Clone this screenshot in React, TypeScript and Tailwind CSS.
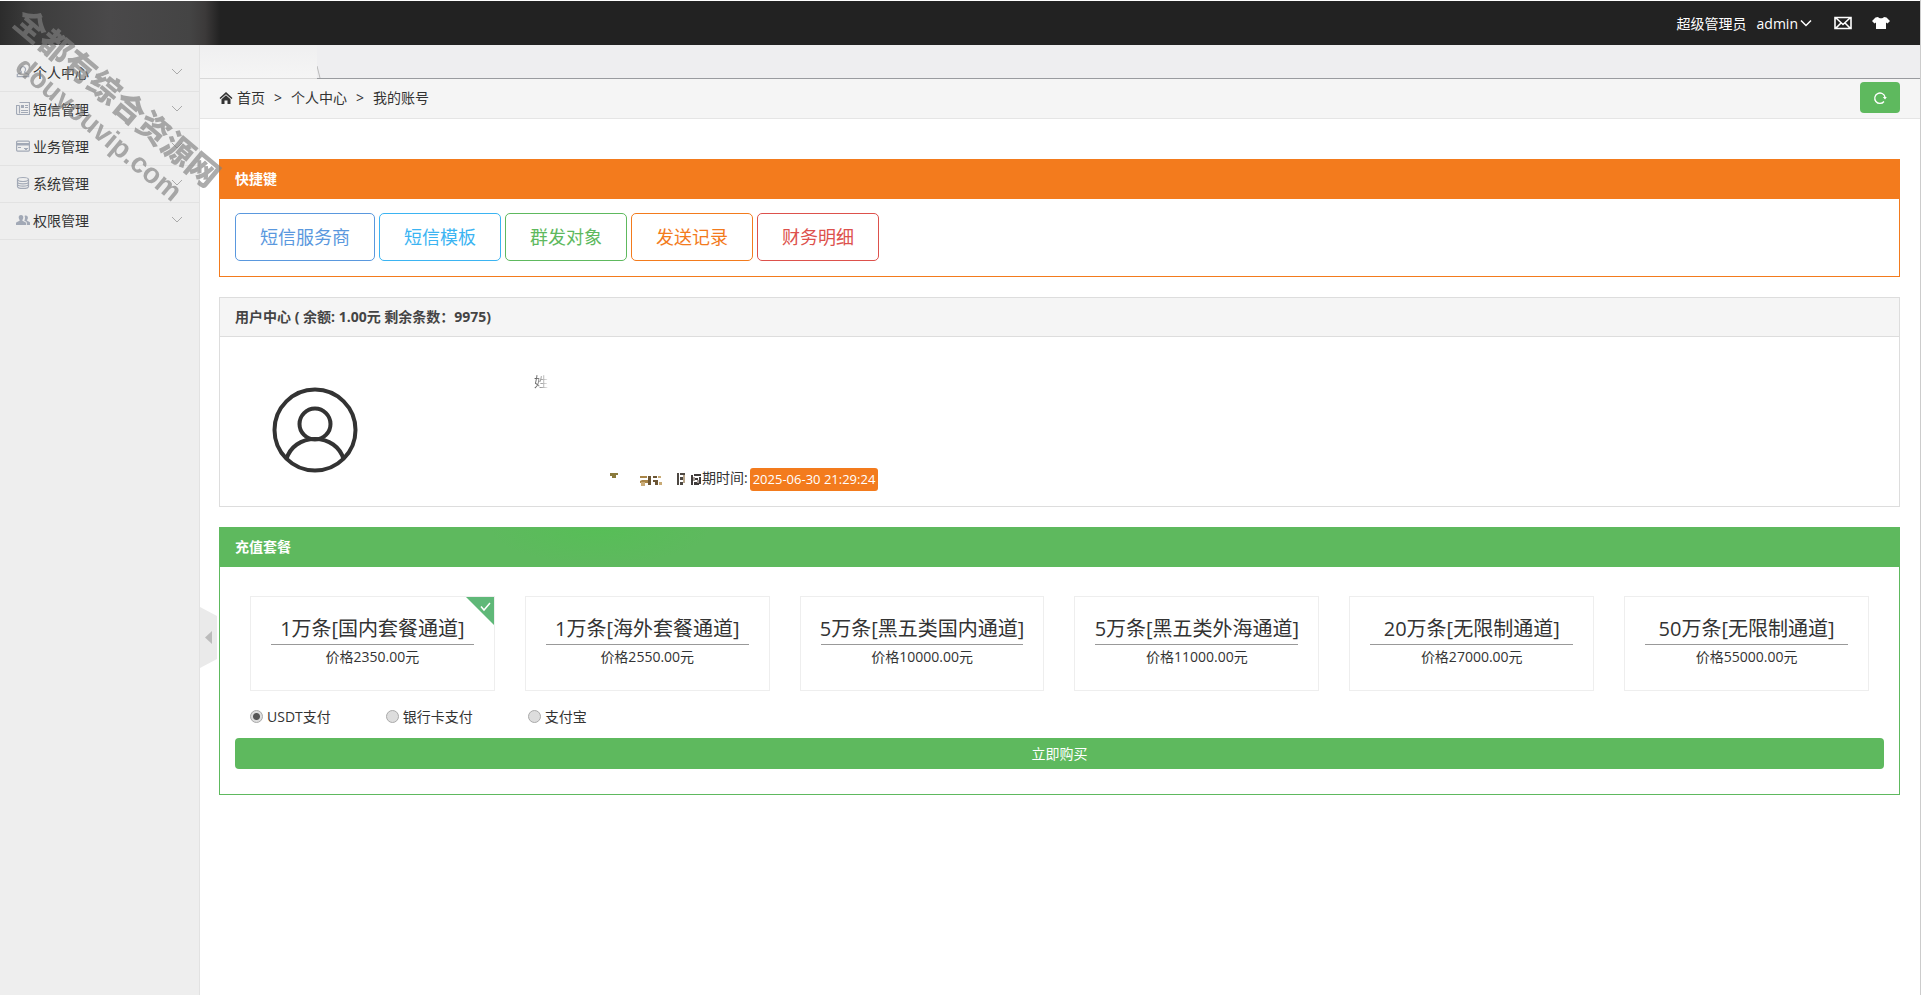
import { useState } from 'react';

const menu = [
  { label: '个人中心', icon: 'user' },
  { label: '短信管理', icon: 'news' },
  { label: '业务管理', icon: 'card' },
  { label: '系统管理', icon: 'database' },
  { label: '权限管理', icon: 'users' },
];

const plans = [
  { title: '1万条[国内套餐通道]', price: '价格2350.00元' },
  { title: '1万条[海外套餐通道]', price: '价格2550.00元' },
  { title: '5万条[黑五类国内通道]', price: '价格10000.00元' },
  { title: '5万条[黑五类外海通道]', price: '价格11000.00元' },
  { title: '20万条[无限制通道]', price: '价格27000.00元' },
  { title: '50万条[无限制通道]', price: '价格55000.00元' },
];

const shortcuts = [
  { label: '短信服务商', className: 'border-[#5a98de] text-[#5a98de]' },
  { label: '短信模板', className: 'border-[#3bb4f2] text-[#3bb4f2]' },
  { label: '群发对象', className: 'border-[#5eb95e] text-[#5eb95e]' },
  { label: '发送记录', className: 'border-[#f37b1d] text-[#f37b1d]' },
  { label: '财务明细', className: 'border-[#dd514c] text-[#dd514c]' },
];

const payments = ['USDT支付', '银行卡支付', '支付宝'];

const MenuIcon = ({ name }: { name: string }) => (
  <svg viewBox="0 0 14 14" className="w-3.5 h-3.5 shrink-0 text-[#a2a9b6]" fill="none" stroke="currentColor">
    {name === 'user' && (
      <path d="M7 1.500a2.800 3 0 0 1 1.700 5.200v1l4 1.600v2.400H1.300V9.300l4-1.600v-1A2.800 3 0 0 1 7 1.500z" strokeWidth="1.200" />
    )}
    {name === 'news' && (
      <g>
        <path d="M3.500.500h10v12H2a1.500 1.500 0 0 1-1.500-1.500V3.500h3M3.500 3.500v8" strokeWidth="1.200" />
        <path d="M9 3.500h3M9 5.500h3M5 8.500h7M5 10.500h7" />
        <path d="M5 3h3v3H5z" fill="currentColor" stroke="none" />
      </g>
    )}
    {name === 'card' && (
      <g>
        <rect x=".6" y="2.100" width="12.800" height="10" rx="1" strokeWidth="1.200" />
        <path d="M1 4h12v2.500H1z" fill="currentColor" stroke="none" />
        <path d="M8 9.500h4M9 10.500h2M2 8.500h3" />
      </g>
    )}
    {name === 'database' && (
      <g strokeWidth="1.200">
        <ellipse cx="7" cy="3.500" rx="5.500" ry="2" />
        <path d="M1.500 3.500v7c0 2.600 11 2.600 11 0v-7M1.500 6c0 2.400 11 2.400 11 0M1.500 8.300c0 2.400 11 2.400 11 0" />
      </g>
    )}
    {name === 'users' && (
      <g fill="currentColor" stroke="none">
        <path d="M5 2c1.600 0 2.400 1.100 2.300 2.600 0 1-.4 1.800-.9 2.300v.9l3.100 1.400c.3.200.5.500.5 1V12H0v-1.800c0-.5.200-.8.500-1l3.100-1.400v-.9c-.5-.5-.9-1.300-.9-2.300C2.600 3.100 3.400 2 5 2z" />
        <path d="M9.800 2.500c1.400 0 2.200 1 2.100 2.300 0 .9-.3 1.600-.8 2v.9l2.500 1.200c.3.100.4.400.4.800V12h-3.200v-2c0-.7-.3-1.100-.8-1.400L8.300 7.700c.5-.8.800-1.900.7-3.200 0-.6-.2-1.200-.5-1.600.4-.3.800-.4 1.300-.4z" />
      </g>
    )}
  </svg>
);

const Header = () => (
  <header className="h-[45px] pt-px bg-white">
    <div className="h-full flex items-center justify-end bg-[linear-gradient(90deg,#2c2c2c_0,#3c3c3c_30px,#4a494a_110px,#444_190px,#3c3a3a_205px,#222_220px)] text-white text-[14px] pr-[30px]">
      <span>超级管理员</span>
      <button className="flex items-center gap-0.5 ml-2.5">
        admin
        <svg viewBox="0 0 12 12" className="w-3 h-3" fill="none" stroke="currentColor" strokeWidth="1.500">
          <path d="M1 3.500l5 5 5-5" />
        </svg>
      </button>
      <button aria-label="消息" className="ml-[22px]">
        <svg viewBox="0 0 18 14" className="w-[18px] h-3.5" fill="none" stroke="currentColor" strokeWidth="1.600">
          <path d="M1 1.500h16v11H1zM2 2l7 6.500L16 2M2 12l5-5M16 12l-5-5" />
        </svg>
      </button>
      <button aria-label="换肤" className="ml-5">
        <svg viewBox="0 0 18 14" className="w-[18px] h-3.5" fill="currentColor">
          <path d="M6 1c1 1.700 5 1.700 6 0l2.500.500L18 5l-2.500 2.500L14 6.500V13H4V6.500L2.500 7.500 0 5l3.500-3.500z" />
        </svg>
      </button>
    </div>
  </header>
);

const Sidebar = () => (
  <aside className="w-[200px] shrink-0 bg-[#eee] border-r border-[#e2e2e2] pt-[10px]">
    <nav>
      {menu.map((item) => (
        <a
          key={item.label}
          href="#"
          className="flex items-center h-[37px] px-4 pb-0.5 border-b border-[#e2e2e2] text-[14px] text-[#333]"
        >
          <MenuIcon name={item.icon} />
          <span className="ml-[3px] flex-1">{item.label}</span>
          <svg viewBox="0 0 12 8" className="w-3 h-2" fill="none" stroke="#aaa">
            <path d="M1 1l5 5 5-5" />
          </svg>
        </a>
      ))}
    </nav>
  </aside>
);

const Watermark = () => (
  <div className="absolute left-8 top-0 origin-top-left rotate-[40deg] text-center text-[#808080] opacity-65 whitespace-nowrap pointer-events-none">
    <p className="text-[32px] leading-10 font-black">全都有综合资源网</p>
    <p className="text-[28px] leading-8 pl-3 font-bold font-['Liberation_Sans',sans-serif]">douyouvip.com</p>
  </div>
);

// leftovers of the masked account details
const MaskedDetails = () => (
  <svg viewBox="0 0 92 14" className="w-[92px] h-3.5" aria-hidden="true">
    <path d="M0 1h8v2H6v3H2V4H0z" fill="#8a7a3c" />
    <path d="M30 4h7v2h-7zM32 8h6v3h-8v-2z" fill="#a98547" />
    <path d="M38 4h3v9h-3zM43 4h4v2h-4zM43 8h5v2h-5zM45 10h3v3h-3z" fill="#6b5534" />
    <path d="M31 10h4v4h-4zM48 4h3v2h-3zM49 10h3v3h-3z" fill="#c9ab77" />
    <path d="M67 1h2v12h-2zM70 1h5v2h-5zM70 5h3v3h-3zM70 10h3v3h-3z" fill="#4d4842" />
    <path d="M73 3h2v8h-2z" fill="#b8a68c" />
    <path d="M81 3h2v10h-2zM84 2h7v2h-7zM85 6h3v2h-3zM84 10h5v3h-5zM89 5h2v7h-2z" fill="#3f3b3a" />
    <path d="M83 5h2v4h-2zM87 8h2v3h-2z" fill="#a69d98" />
  </svg>
);

export default function App() {
  const [plan, setPlan] = useState(0);
  const [payment, setPayment] = useState(0);

  return (
    <div className="relative min-h-screen flex flex-col overflow-hidden bg-white border-r border-[#ccc] text-[#333] text-[14px] font-['Open_Sans','Noto_Sans_CJK_SC',sans-serif]">
      <Header />

      <div className="flex flex-1">
        <Sidebar />

        <div className="relative flex-1 min-w-0">
          {/* Tab strip */}
          <div className="h-[34px] flex bg-[#eeeef0] border-b border-[#999b9f]">
            <div className="w-[117px] h-[34px] bg-gradient-to-b from-[#efeff0] to-[#f5f5f5] border-b border-[#d8d8d8]" />
            <svg viewBox="0 0 6 12" className="w-1.5 h-3 self-end" fill="none" stroke="#bbb">
              <path d="M0 0l3 12" />
            </svg>
          </div>

          {/* Breadcrumb */}
          <div className="h-10 flex items-center justify-between bg-[#f5f5f5] border-b border-[#e5e5e5] pl-[19px] pr-5 pb-0.5">
            <nav className="flex items-center">
              <svg viewBox="0 0 14 14" className="w-3.5 h-3.5 mr-1" fill="#333">
                <path d="M7 1l6.500 6-1 1L7 3.200 1.500 8l-1-1zM7 4.300l4.500 4V13H8.500V9.500h-3V13h-3V8.300z" />
              </svg>
              <a href="#">首页</a>
              <span className="mx-[9px]">&gt;</span>
              <span>个人中心</span>
              <span className="mx-[9px]">&gt;</span>
              <span>我的账号</span>
            </nav>
            <button aria-label="刷新" className="w-10 h-[31px] rounded bg-[#5eb95e] flex items-center justify-center">
              <svg viewBox="0 0 14 14" className="w-3.5 h-3.5" fill="none" stroke="white" strokeWidth="1.300">
                <path d="M11 10.500A5.200 5.200 0 1 1 12 6" />
                <path d="M9.800 6h4L12 8.500z" fill="white" stroke="none" />
              </svg>
            </button>
          </div>

          <button
            aria-label="收起菜单"
            className="absolute left-0 top-[562px] w-[17px] h-[61px]"
          >
            <svg viewBox="0 0 17 61" className="w-full h-full">
              <path d="M0 0l17 9v43L0 61z" fill="#eaeaea" />
              <path d="M12 24v13l-7-6.500z" fill="#bbb" />
            </svg>
          </button>

          <main className="pl-[19px] pr-5 pt-10 pb-10 flex flex-col gap-5">
            <section className="border border-[#f37b1d]">
              <h2 className="h-[39px] flex items-center px-[15px] pb-0.5 bg-[#f37b1d] text-white font-bold">快捷键</h2>
              <div className="flex flex-wrap gap-1 px-[15px] pt-3.5 pb-[15px]">
                {shortcuts.map((item) => (
                  <button
                    key={item.label}
                    className={`h-12 px-6 rounded-[5px] border text-[18px] ${item.className}`}
                  >
                    {item.label}
                  </button>
                ))}
              </div>
            </section>

            <section className="border border-[#ddd]">
              <h2 className="h-[39px] flex items-center px-[15px] pb-0.5 bg-[#f5f5f5] border-b border-[#ddd] text-[#444] font-bold">
                用户中心 ( 余额: 1.00元 剩余条数：9975)
              </h2>
              <div className="h-[169px] flex pl-[52px] pt-[34px]">
                <svg viewBox="0 0 86 86" className="mt-4 w-[86px] h-[86px]" fill="none" stroke="#333" strokeWidth="4">
                  <circle cx="43" cy="43" r="40.500" />
                  <circle cx="43" cy="37" r="15.500" />
                  <path d="M14.500 72C18 60 29 52 43 52s25 8 28.500 20" />
                </svg>
                <div className="ml-[176px] flex flex-col justify-between pb-[15px]">
                  <span className="self-start bg-gradient-to-r from-[#555] to-[#eee] bg-clip-text text-transparent">姓</span>
                  <div className="flex items-start pl-[76px]">
                    <span className="pt-1">
                      <MaskedDetails />
                    </span>
                    <span className="mr-0.5 leading-5">期时间:</span>
                    <span className="h-[23px] px-[3px] flex items-center rounded-[3px] bg-[#f37b1d] text-white text-[13px]">
                      2025-06-30 21:29:24
                    </span>
                  </div>
                </div>
              </div>
            </section>

            <section className="border border-[#5eb95e]">
              <h2 className="h-[39px] flex items-center px-[15px] pb-0.5 bg-[#5eb95e] bg-[radial-gradient(110px_36px_at_380px_0px,#57be57,#5eb95e)] text-white font-bold">
                充值套餐
              </h2>
              <div className="px-[15px] pt-[29px] pb-[25px]">
                <div className="grid grid-cols-6 gap-[30px] px-[15px]">
                  {plans.map((item, index) => (
                    <button
                      key={item.title}
                      onClick={() => setPlan(index)}
                      className="relative h-[95px] px-5 pt-[18px] border border-[#eee] flex flex-col text-center"
                    >
                      <span className="w-full h-[30px] flex justify-center border-b border-[#999] text-[20px] leading-7 whitespace-nowrap">
                        {item.title}
                      </span>
                      <span className="w-full leading-6">{item.price}</span>
                      {plan === index && (
                        <svg viewBox="0 0 28 28" className="absolute top-0 right-0 w-7 h-7">
                          <path d="M0 0h28v28z" fill="#5fb878" />
                          <path d="M15 9.500l3 3.500 6-7" fill="none" stroke="white" strokeWidth="1.500" />
                        </svg>
                      )}
                    </button>
                  ))}
                </div>
                <div className="flex px-[15px] pt-[15px] h-[47px] gap-[55px]">
                  {payments.map((label, index) => (
                    <label key={label} className="flex items-center gap-1 h-5">
                      <input
                        type="radio"
                        name="payment"
                        checked={payment === index}
                        onChange={() => setPayment(index)}
                        className="appearance-none w-[13px] h-[13px] rounded-full border border-[#aaa] bg-[#ddd] checked:bg-[radial-gradient(circle,#555_3px,#ddd_4px)]"
                      />
                      {label}
                    </label>
                  ))}
                </div>
                <button className="w-full h-[31px] rounded bg-[#5eb95e] text-white">立即购买</button>
              </div>
            </section>
          </main>
        </div>
      </div>

      <Watermark />
    </div>
  );
}
